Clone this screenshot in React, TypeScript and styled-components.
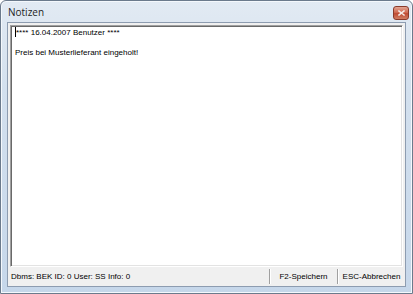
import React from "react";
import styled, { createGlobalStyle } from "styled-components";

const GlobalStyle = createGlobalStyle`
  html, body {
    margin: 0;
    padding: 0;
    background: #ffffff;
  }
  body {
    font-family: "Liberation Sans", Arial, sans-serif;
  }
`;

const Window = styled.div`
  width: 413px;
  height: 294px;
  box-sizing: border-box;
  display: flex;
  flex-direction: column;
  border: 1px solid #6b7a8c;
  border-radius: 6px 6px 0 0;
  background: linear-gradient(180deg, #e2eaf3 0%, #d3e0ee 30%, #c6d7ea 100%);
  box-shadow: inset 0 0 0 1px #f4f8fc;
  overflow: hidden;
`;

const TitleBar = styled.div`
  height: 21px;
  display: flex;
  align-items: center;
  justify-content: space-between;
  padding: 0 3px 0 7px;
`;

const Title = styled.span`
  font-family: "Open Sans", "Liberation Sans", sans-serif;
  font-size: 10px;
  color: #1e1e1e;
  padding-top: 1px;
`;

const CloseButton = styled.div`
  width: 16px;
  height: 14px;
  margin-top: 3px;
  box-sizing: border-box;
  border: 1px solid #8a3a2a;
  border-radius: 3px;
  background: linear-gradient(180deg, #e3a592 0%, #d06a52 45%, #bf4b33 55%, #d07d62 100%);
  display: flex;
  align-items: center;
  justify-content: center;
`;

const Client = styled.div`
  flex: 1;
  display: flex;
  flex-direction: column;
  margin: 0 6px 6px 6px;
  border: 1px solid #8d9cb0;
  background: #f0f0f0;
`;

const EditBox = styled.div`
  flex: 1;
  margin: 2px 2px 0 2px;
  background: #ffffff;
  border-top: 1px solid #a0a0a0;
  border-left: 1px solid #a0a0a0;
  border-right: 1px solid #ffffff;
  border-bottom: 1px solid #ffffff;
  box-shadow: inset 1px 1px 0 #696969, inset -1px -1px 0 #e3e3e3;
  padding: 1px 4px;
  font-size: 8px;
  color: #000000;
`;

const Line = styled.div<{ $gap?: number }>`
  line-height: 10px;
  margin-top: ${(p) => p.$gap ?? 0}px;
  white-space: pre;
`;

const Caret = styled.span`
  display: inline-block;
  width: 1px;
  height: 10px;
  background: #000;
  vertical-align: -2px;
`;

const StatusBar = styled.div`
  height: 19px;
  display: flex;
  align-items: center;
  font-size: 8px;
  color: #000;
`;

const StatusText = styled.div`
  flex: 1;
  padding-left: 3px;
`;

const Panel = styled.div<{ $w: number }>`
  width: ${(p) => p.$w}px;
  height: 15px;
  display: flex;
  align-items: center;
  justify-content: center;
  border-left: 1px solid #a0a0a0;
  box-shadow: inset 1px 0 0 #ffffff;
`;

export default function App() {
  return (
    <>
      <GlobalStyle />
      <Window>
        <TitleBar>
          <Title>Notizen</Title>
          <CloseButton>
            <svg width="7" height="6" viewBox="0 0 7 6">
              <path d="M1 1 L6 5 M6 1 L1 5" stroke="#f6ece8" strokeWidth="1.6" strokeLinecap="square" />
            </svg>
          </CloseButton>
        </TitleBar>
        <Client>
          <EditBox>
            <Line>
              <Caret />
              {"**** 16.04.2007 Benutzer ****"}
            </Line>
            <Line $gap={10}>Preis bei Musterlieferant eingeholt!</Line>
          </EditBox>
          <StatusBar>
            <StatusText>Dbms: BEK ID: 0 User: SS Info: 0</StatusText>
            <Panel $w={67}>F2-Speichern</Panel>
            <Panel $w={67}>ESC-Abbrechen</Panel>
          </StatusBar>
        </Client>
      </Window>
    </>
  );
}
